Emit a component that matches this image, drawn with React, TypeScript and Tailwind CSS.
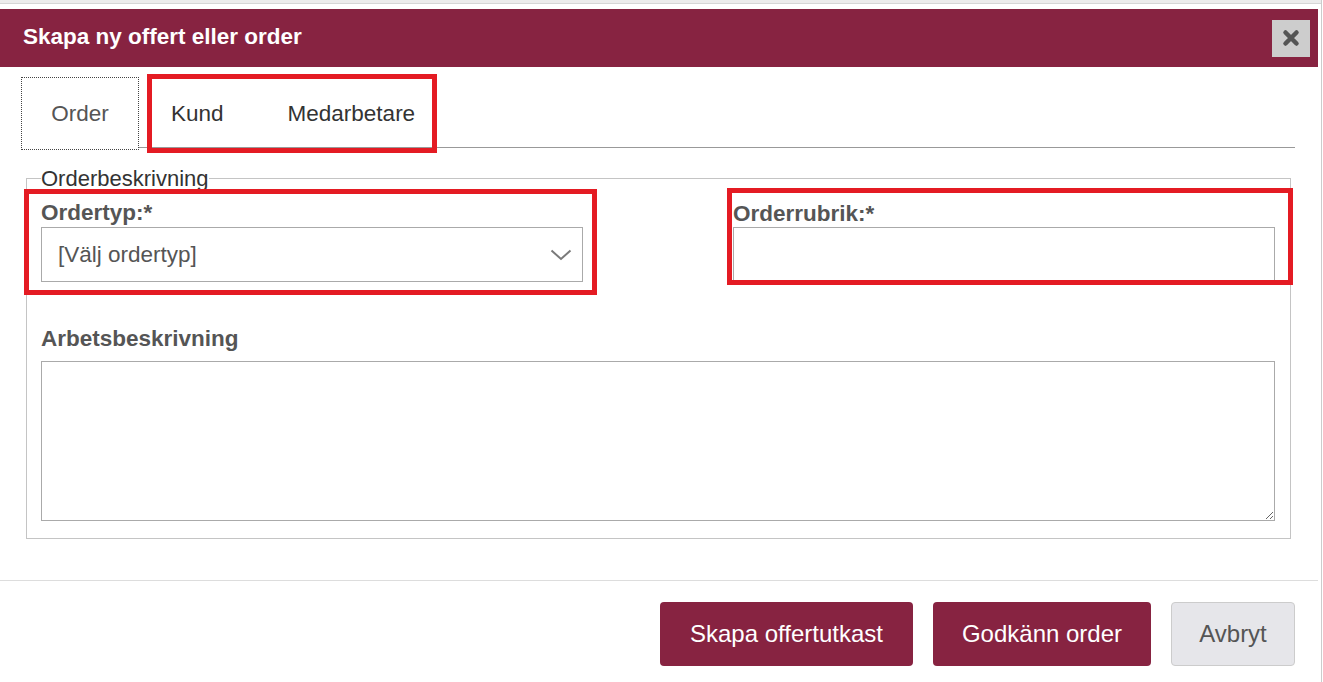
import { useState } from "react";

const RED_BOXES = [
  { id: "tabs", className: "left-[147px] top-[74px] w-[290px] h-[79px]" },
  { id: "ordertyp", className: "left-[24px] top-[189px] w-[573px] h-[106px]" },
  { id: "rubrik", className: "left-[727px] top-[188px] w-[566px] h-[97px]" },
];

function CloseIcon() {
  return (
    <svg width="18" height="18" viewBox="0 0 18 18">
      <path d="M3.5 3.5 L14.5 14.5 M14.5 3.5 L3.5 14.5" stroke="#555" strokeWidth="4.5" strokeLinecap="round" />
    </svg>
  );
}

function Chevron() {
  return (
    <svg width="22" height="12" viewBox="0 0 22 12" className="shrink-0">
      <path d="M1.5 1.5 L11 10 L20.5 1.5" fill="none" stroke="#7a7a7a" strokeWidth="2" />
    </svg>
  );
}

export default function App() {
  const [tab, setTab] = useState("Order");
  const [rubrik, setRubrik] = useState("");

  return (
    <div className="relative w-[1322px] h-[682px] overflow-hidden bg-white border-r border-[#cccccc] font-['Liberation_Sans',Arial,sans-serif]">
      {/* top edge of page */}
      <div className="h-[3px] bg-[#ececec]"></div>
      <div className="h-px bg-[#d6d6d6]"></div>
      <div className="h-[5px]"></div>

      {/* Header */}
      <div className="w-[1318px] h-[58px] bg-[#872341] flex items-center justify-between pl-[23px] pr-[8px]">
        <h2 className="text-[22.5px] font-bold text-white leading-[25px] mb-[3px]">Skapa ny offert eller order</h2>
        <button className="w-[38px] h-[37px] bg-[#cdcdcd] flex items-center justify-center">
          <CloseIcon />
        </button>
      </div>

      {/* Tabs */}
      <div className="mt-[10px] ml-[21px] w-[1274px] h-[73px] flex items-start">
        <button
          onClick={() => setTab("Order")}
          className="w-[118px] h-[73px] border border-dotted border-[#444] text-[22.5px] text-[#555] flex items-center justify-center"
        >
          Order
        </button>
        <div className="flex-1 h-[71px] border-b border-[#999999] flex items-center pt-[2px]">
          {["Kund", "Medarbetare"].map((t) => (
            <button
              key={t}
              onClick={() => setTab(t)}
              className={`px-[32px] text-[22.5px] leading-[25px] ${tab === t ? "text-[#111]" : "text-[#333]"}`}
            >
              {t}
            </button>
          ))}
        </div>
      </div>

      {/* Fieldset */}
      <fieldset className="mt-[16px] ml-[26px] w-[1265px] border border-[#c4c4c4] pl-[14px] pr-[15px] pt-[9px] pb-[17px]">
        <legend className="text-[22px] leading-[25px] text-[#333] px-0">Orderbeskrivning</legend>
        <div className="grid grid-cols-2 gap-[150px]">
          <div>
            <label className="block text-[22.5px] leading-[25px] font-bold text-[#555]">Ordertyp:*</label>
            <div className="mt-[2px] h-[55px] border border-[#aaaaaa] flex items-center justify-between pl-[16px] pr-[10px]">
              <span className="text-[22.5px] text-[#555]">[Välj ordertyp]</span>
              <Chevron />
            </div>
          </div>
          <div>
            <label className="block text-[22.5px] leading-[25px] font-bold text-[#555] mt-[1px]">Orderrubrik:*</label>
            <input
              value={rubrik}
              onChange={(e) => setRubrik(e.target.value)}
              className="mt-px w-full h-[55px] border border-[#aaaaaa] px-[12px] text-[22px] text-[#555] outline-none"
            />
          </div>
        </div>
        <label className="block mt-[44px] text-[22.5px] leading-[25px] font-bold text-[#555]">Arbetsbeskrivning</label>
        <textarea className="mt-[10px] block w-full h-[160px] border border-[#aaaaaa] outline-none" />
      </fieldset>

      {/* Footer */}
      <div className="mt-[41px] w-[1318px] h-px bg-[#dddddd]"></div>
      <div className="w-[1318px] flex justify-end gap-[20px] pt-[21px] pr-[23px]">
        <button className="w-[253px] h-[64px] rounded-[4px] bg-[#872341] text-white text-[24px]">
          Skapa offertutkast
        </button>
        <button className="w-[218px] h-[64px] rounded-[4px] bg-[#872341] text-white text-[24px]">
          Godkänn order
        </button>
        <button className="w-[124px] h-[64px] rounded-[4px] bg-[#e6e6ea] border border-[#cccccc] text-[#555] text-[24px]">
          Avbryt
        </button>
      </div>

      {/* Red highlight boxes */}
      {RED_BOXES.map((b) => (
        <div key={b.id} className={`absolute border-[5px] border-[#e41b23] pointer-events-none ${b.className}`}></div>
      ))}
    </div>
  );
}
